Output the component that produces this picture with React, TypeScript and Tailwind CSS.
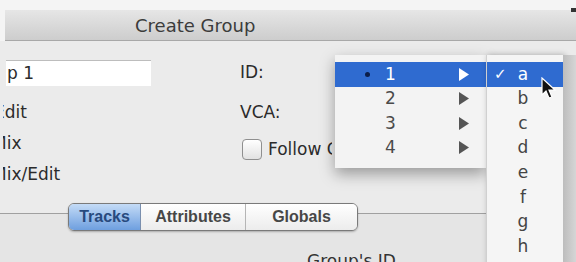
import React from 'react';

const font = { fontFamily: '"DejaVu Sans", "Lucida Grande", sans-serif' };
const tabFont = { fontFamily: '"Liberation Sans", Arial, sans-serif' };

const ids = ['1', '2', '3', '4'];
const letters = ['a', 'b', 'c', 'd', 'e', 'f', 'g', 'h'];

const Triangle: React.FC<{ light?: boolean }> = ({ light }) => (
  <svg width="12" height="15" viewBox="0 0 12 15">
    <path d="M1 1 L11 7.5 L1 14 Z" fill={light ? '#ffffff' : '#555555'} />
  </svg>
);

const Cursor = () => (
  <svg width="16" height="24" viewBox="0 0 16 24" className="absolute left-[541px] top-[77px]">
    <path d="M1 1 L1 18 L5 14 L8 21 L11 20 L8 13 L14 13 Z" fill="#111" stroke="#fff" strokeWidth="1.2" />
  </svg>
);

export default function App() {
  return (
    <div className="relative w-[576px] h-[262px] overflow-hidden bg-[#f4f4f4] text-[#2b2b2b]" style={font}>
      <div className="pt-[10px] flex flex-col h-[262px]">
        {/* title bar */}
        <div className="ml-[5px] h-[31px] flex items-center bg-gradient-to-b from-[#e6e6e6] to-[#cdcdcd] border-b border-[#a8a8a8]">
          <span className="ml-[130px] text-[18px] text-[#3c3c3c]">Create Group</span>
        </div>

        {/* body */}
        <div className="flex-1 flex flex-col bg-[#ebebeb]">
          <div className="h-[172px] flex pt-[19px] text-[17px]">
            <div className="w-[240px] flex flex-col">
              <div className="ml-[6px] w-[145px] h-[26px] bg-white border-t border-[#bdbdbd] flex items-center pl-[1px]">p 1</div>
              <div className="mt-[11px] ml-[3px] flex flex-col overflow-hidden whitespace-nowrap">
                <span className="h-[31px] flex items-center -ml-[9px]">Edit</span>
                <span className="h-[31px] flex items-center -ml-[11px]">Mix</span>
                <span className="h-[31px] flex items-center -ml-[11px]">Mix/Edit</span>
              </div>
            </div>
            <div className="flex flex-col">
              <span className="h-[26px] flex items-center">ID:</span>
              <span className="mt-[11px] h-[31px] flex items-center">VCA:</span>
              <div className="mt-[9px] flex items-center gap-[6px] ml-[2px]">
                <span className="w-[20px] h-[21px] rounded-[4px] border border-[#8f8f8f] bg-gradient-to-b from-white to-[#e2e2e2]" />
                <span className="w-[64px] overflow-hidden whitespace-nowrap">Follow Globals</span>
              </div>
            </div>
          </div>

          {/* lower pane with tab control */}
          <div className="relative flex-1 border-t border-[#a0a0a0] bg-[#e5e5e5]">
            <div className="absolute left-[68px] top-[-11px] flex h-[28px] rounded-[6px] border border-[#7a7a7a] overflow-hidden text-[16px] font-bold shadow-[0_1px_2px_rgba(0,0,0,0.25)]" style={tabFont}>
              <span className="w-[72px] flex items-center justify-center bg-gradient-to-b from-[#c4dbf6] to-[#6e9fdf] text-[#284a7e] border-r border-[#7a8fae]">Tracks</span>
              <span className="w-[105px] flex items-center justify-center bg-gradient-to-b from-white to-[#ececec] text-[#474747] border-r border-[#b5b5b5]">Attributes</span>
              <span className="w-[111px] flex items-center justify-center bg-gradient-to-b from-white to-[#ececec] text-[#474747]">Globals</span>
            </div>
            <span className="absolute left-[307px] top-[37px] text-[17px] leading-[20px] text-[#333]">Group's ID</span>
          </div>
        </div>
      </div>

      {/* top-right mark */}
      <div className="absolute right-0 top-[8px] w-[5px] h-[4px] bg-[#333]" />

      {/* ID menu */}
      <div className="absolute left-[335px] top-[55px] w-[151px] pt-[7px] pb-[8px] bg-[#f3f3f3] shadow-[0_6px_14px_rgba(0,0,0,0.35)] text-[17px] text-[#4a4a4a]">
        {ids.map((id, i) => (
          <div key={id} className={`h-[24.5px] flex items-center ${i === 0 ? 'bg-[#2f6bd0] text-white' : ''}`}>
            <span className="w-[40px] flex justify-end pr-[5px]">
              {i === 0 && <span className="w-[5px] h-[5px] rounded-full bg-[#0b1e4a]" />}
            </span>
            <span className="w-[83px] pl-[10px]">{id}</span>
            <Triangle light={i === 0} />
          </div>
        ))}
      </div>

      {/* letter submenu */}
      <div className="absolute left-[486px] top-[55px] w-[77px] h-[220px] pt-[7px] bg-[#f5f5f5] border-l border-[#d0d0d0] shadow-[2px_0_6px_rgba(0,0,0,0.3)] text-[17px] text-[#444]">
        {letters.map((l, i) => (
          <div key={l} className={`h-[24.6px] flex items-center ${i === 0 ? 'bg-[#2f6bd0] text-white' : ''}`}>
            <span className="w-[29px] pl-[7px] text-[15px]">{i === 0 ? '✓' : ''}</span>
            <span className="w-[14px] text-center">{l}</span>
          </div>
        ))}
      </div>
      <div className="absolute left-[563px] top-[55px] right-0 bottom-0 bg-gradient-to-r from-[#bdbdbd] to-[#d6d6d6]" />
      <Cursor />
    </div>
  );
}
